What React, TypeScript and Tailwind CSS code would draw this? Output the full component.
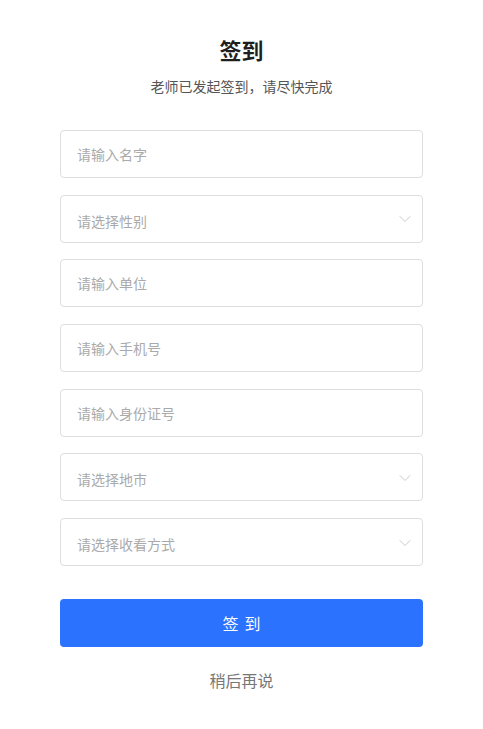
import React from "react";

const FIELDS = [
  { id: "name", placeholder: "请输入名字", select: false },
  { id: "gender", placeholder: "请选择性别", select: true },
  { id: "company", placeholder: "请输入单位", select: false },
  { id: "phone", placeholder: "请输入手机号", select: false },
  { id: "idcard", placeholder: "请输入身份证号", select: false },
  { id: "city", placeholder: "请选择地市", select: true },
  { id: "watch", placeholder: "请选择收看方式", select: true },
];

const Chevron = () => (
  <svg width="12" height="8" viewBox="0 0 12 8" fill="none" className="shrink-0">
    <path d="M1 1.5L6 6.5L11 1.5" stroke="#c8c9cc" strokeWidth="1" strokeLinecap="round" strokeLinejoin="round" />
  </svg>
);

const App = () => {
  return (
    <div
      className="min-h-[729px] bg-white flex flex-col items-center pt-[34px]"
      style={{ fontFamily: '"Noto Sans CJK SC", "Noto Sans", sans-serif' }}
    >
      <h1 className="text-[22px] leading-[30px] font-bold text-[#1f1f1f]">签到</h1>
      <p className="mt-[12px] text-[14px] leading-[20px] text-[#555]">老师已发起签到，请尽快完成</p>

      <form className="mt-[34px] w-[363px] flex flex-col gap-[16.7px]">
        {FIELDS.map((field) =>
          field.select ? (
            <div
              key={field.id}
              className="h-[48px] rounded-[4px] border border-[#dcdee0] flex items-center justify-between pl-[16px] pr-[11px] pt-[5px]"
            >
              <span className="text-[14px] text-[#aaaaaa]">{field.placeholder}</span>
              <div className="-mt-[4px]">
                <Chevron />
              </div>
            </div>
          ) : (
            <input
              key={field.id}
              type="text"
              placeholder={field.placeholder}
              className="h-[48px] rounded-[4px] border border-[#dcdee0] px-[16px] text-[14px] text-[#333] placeholder:text-[#aaaaaa] outline-none"
            />
          )
        )}
      </form>

      <button
        type="button"
        className="mt-[33px] w-[363px] h-[48px] rounded-[4px] bg-[#2b72ff] text-white text-[16px] tracking-[6px] pl-[6px]"
      >
        签到
      </button>
      <button type="button" className="mt-[22px] text-[16px] leading-[22px] text-[#777]">
        稍后再说
      </button>
    </div>
  );
};

export default App;
